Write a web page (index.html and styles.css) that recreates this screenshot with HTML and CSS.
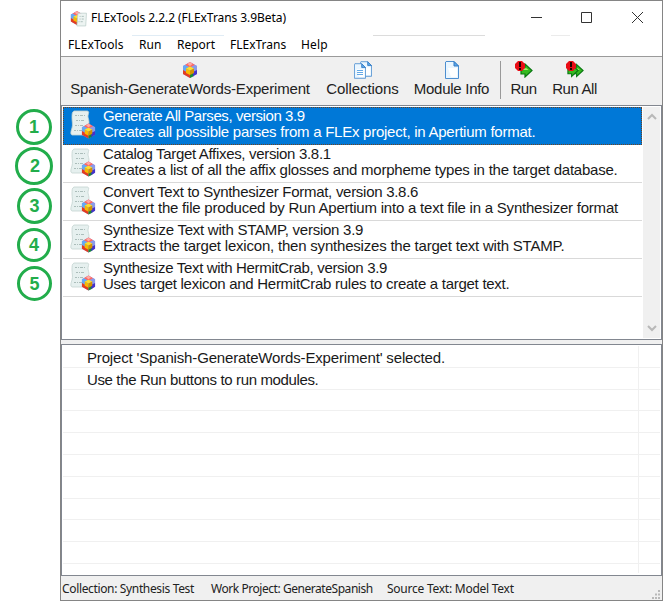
FILE: index.html
```html
<!DOCTYPE html>
<html lang="en">
<head>
<meta charset="utf-8">
<title>FLExTools</title>
<link rel="stylesheet" href="styles.css">
</head>
<body>
<svg class="defs" width="0" height="0">
  <defs>
    <symbol id="cube" viewBox="0 0 16 16">
      <path fill="#9d8fe0" d="M8 0l7 4v8l-7 4-7-4V4z"/>
      <path fill="#ff6a62" d="M8 0l5 3-5 3-5-3z"/>
      <path fill="#ffaaa5" d="M8 0l2.500 2L8 4 5.500 2z"/>
      <path fill="#65a8f5" d="M1 4l2-1 4 2v6l-6-3z"/>
      <path fill="#8a9bea" d="M15 4l-2-1-4 2v6l6-3z"/>
      <path fill="#e23c22" d="M1 8l7 4v4l-7-4z"/>
      <path fill="#168a36" d="M8 11v5l4-2V9z"/>
      <path fill="#4532c9" d="M15 8l-4 2v4.300l4-2.300z"/>
      <path fill="#ffe02a" d="M8 4.500l4 2-4 2-4-2z"/>
      <path fill="#f8ba00" d="M4 6.500l4 2V13l-4-2z"/>
      <path fill="#d59200" d="M12 6.500l-4 2V13l4-2z"/>
    </symbol>
    <symbol id="module" viewBox="0 0 26 29">
      <path fill="#e6f0ef" stroke="#c3d3d1" stroke-width=".8" d="M4 1h13c1.500 0 2 1 1.500 2.500-1.500 4 .5 5 .5 8.500 0 6-2 8-1 13H2c-2-1-1-4 0-7 1-4 0-6 0-10C2 4 2 2 4 1z"/>
      <path stroke="#abbdba" stroke-width="1" stroke-dasharray="2 1 1 1 3 1" d="M5 5.500h10M6 10.500h9M5 15.500h9M4 20.500h8"/>
      <svg x="11" y="13" width="15" height="16"><use href="#cube"/></svg>
    </symbol>
    <symbol id="page" viewBox="0 0 14 18">
      <path fill="#eaf6ff" stroke="#4d8fd0" d="M1 .5h8l4.500 4.500v12.500H.5V1z"/>
      <path fill="#fff" d="M3 7h9v9H6z"/>
      <path fill="#5ba8ea" stroke="#347bc4" d="M9 .5V5h4.500z"/>
    </symbol>
    <symbol id="arrow" viewBox="0 0 13 15">
      <path fill="#36ba20" stroke="#087711" stroke-width="1.200" d="M1 4h4V1l7 6.500L5 14v-3H1z"/>
      <path fill="#a4ef69" d="M2 5.200h4.500l2 1.800H2z"/>
    </symbol>
    <symbol id="alert" viewBox="0 0 10 10">
      <path fill="#e90c15" d="M3 0h4l3 3v4l-3 3H3L0 7V3z"/>
      <path fill="#240000" d="M4 1h2v5H4zM4 7h2v2H4z"/>
    </symbol>
  </defs>
</svg>
<div class="page">
  <ol class="steps">
    <li class="s1">1</li><li class="s2">2</li><li class="s3">3</li><li class="s4">4</li><li class="s5">5</li>
  </ol>
  <main class="window">
    <header class="titlebar">
      <svg class="appicon" viewBox="0 0 16 16"><svg width="13" height="15"><use href="#cube"/></svg><path fill="#edf4f2" stroke="#bdcfcb" stroke-width=".7" d="M7.500 3h8l-.7 12H6.500z"/><path stroke="#9aafab" stroke-width=".7" stroke-dasharray="1 1 2 1" d="M9 6h5M9 8.500h5M8 11h5"/></svg>
      <span class="title">FLExTools 2.2.2 (FLExTrans 3.9Beta)</span>
      <svg class="controls" width="112" height="14" viewBox="0 0 112 14"><path fill="none" stroke="#333" d="M0 6.500h11M50.500 1.500h10v10h-10zM101 1l11 11M112 1l-11 11"/></svg>
    </header>
    <nav class="menu"><span class="m1">FLExTools</span><span class="m2">Run</span><span class="m3">Report</span><span class="m4">FLExTrans</span><span class="m5">Help</span></nav>
    <div class="toolbar">
      <button class="t1"><svg width="16" height="18"><use href="#cube"/></svg><span>Spanish-GenerateWords-Experiment</span></button>
      <button class="t2"><svg width="18" height="18" viewBox="0 0 18 18"><svg x="6" width="12" height="16"><use href="#page"/></svg><svg y="2" width="12" height="16"><use href="#page"/></svg><path stroke="#65a9e6" d="M3 9.500h6M3 11.500h6M3 13.500h6"/></svg><span>Collections</span></button>
      <button class="t3"><svg width="14" height="18"><use href="#page"/></svg><span>Module Info</span></button>
      <i class="separator"></i>
      <button class="t4"><svg width="18" height="18" viewBox="0 0 18 18"><svg x="5" y="2" width="13" height="15"><use href="#arrow"/></svg><svg width="10" height="10"><use href="#alert"/></svg></svg><span>Run</span></button>
      <button class="t5"><svg width="18" height="18" viewBox="0 0 18 18"><svg x="6" y="2" width="12" height="15"><use href="#arrow"/></svg><svg x="1" y="2" width="12" height="15"><use href="#arrow"/></svg><svg width="10" height="10"><use href="#alert"/></svg></svg><span>Run All</span></button>
    </div>
    <section class="modules">
      <div class="list">
        <article class="selected"><svg class="moduleicon"><use href="#module"/></svg><p><span class="a1">Generate All Parses, version 3.9</span><span class="b1">Creates all possible parses from a FLEx project, in Apertium format.</span></p></article>
        <article><svg class="moduleicon"><use href="#module"/></svg><p><span class="a2">Catalog Target Affixes, version 3.8.1</span><span class="b2">Creates a list of all the affix glosses and morpheme types in the target database.</span></p></article>
        <article><svg class="moduleicon"><use href="#module"/></svg><p><span class="a3">Convert Text to Synthesizer Format, version 3.8.6</span><span class="b3">Convert the file produced by Run Apertium into a text file in a Synthesizer format</span></p></article>
        <article><svg class="moduleicon"><use href="#module"/></svg><p><span class="a4">Synthesize Text with STAMP, version 3.9</span><span class="b4">Extracts the target lexicon, then synthesizes the target text with STAMP.</span></p></article>
        <article><svg class="moduleicon"><use href="#module"/></svg><p><span class="a5">Synthesize Text with HermitCrab, version 3.9</span><span class="b5">Uses target lexicon and HermitCrab rules to create a target text.</span></p></article>
      </div>
      <div class="scrollbar"><svg width="10" height="7"><path d="M1 6l4-4 4 4"/></svg><svg width="10" height="7"><path d="M1 1l4 4 4-4"/></svg></div>
    </section>
    <section class="messages">
      <div><span class="c1">Project 'Spanish-GenerateWords-Experiment' selected.</span></div><div><span class="c2">Use the Run buttons to run modules.</span></div><div></div><div></div><div></div><div></div><div></div><div></div><div></div><div></div>
    </section>
    <footer class="status"><span class="f1">Collection: Synthesis Test</span><span class="f2">Work Project: GenerateSpanish</span><span class="f3">Source Text: Model Text</span><svg width="10" height="10"><path fill="#b9b9b9" d="M7 0h2v2H7zM4 3.500h2v2H4zM7 3.500h2v2H7zM1 7h2v2H1zM4 7h2v2H4zM7 7h2v2H7z"/></svg></footer>
  </main>
</div>
</body>
</html>
```
FILE: styles.css
```css
* { box-sizing: border-box; }
body { margin: 0; background: #fff; color: #191919; overflow: hidden; font-family: "Liberation Sans", sans-serif; }
.defs { position: absolute; }
.page { display: flex; width: 663px; height: 602px; }
.steps { list-style: none; margin: 0; padding: 109px 0 0 15px; width: 60px; flex: none; color: #22ad4b; font: bold 18px/30px "Liberation Sans", sans-serif; }
.steps li { width: 36px; height: 36px; border: 3px solid #22ad4b; border-radius: 50%; text-align: center; margin: 0 0 2px 1px; }
.steps .s2 { width: 38px; height: 38px; line-height: 32px; margin: 0 0 3px; padding-left: 2px; }
.steps .s3 { width: 35px; margin-left: 2px; margin-bottom: 4px; }
.steps .s4 { width: 34px; height: 34px; line-height: 28px; margin: 0 0 4px 2px; }
.steps .s5 { width: 35px; height: 35px; margin-left: 2px; }
.window { width: 603px; height: 601px; border: 1px solid #858585; display: flex; flex-direction: column; white-space: nowrap; background: #f0f0f0; }
.titlebar { height: 34px; flex: none; background: #fff; display: flex; align-items: center; padding: 0 19px 0 9px; font: 12px/20px "Noto Sans", sans-serif; color: #000; }
.title { letter-spacing: -.06px; }
.appicon { width: 17px; height: 17px; margin-right: 4px; }
.controls { margin-left: auto; overflow: visible; }
.menu { background: linear-gradient(#dcdcdc, #dcdcdc) 312px 0 / 112px 1px no-repeat, linear-gradient(#ebebeb, #ebebeb) 490px 0 / 19px 1px no-repeat, linear-gradient(#e0ecf5, #e0ecf5) 71px 0 / 92px 1px no-repeat, #fff; height: 21px; flex: none; display: flex; padding-left: 7px; font: 12px/20px "Noto Sans", sans-serif; color: #000; }
.menu .m1 { width: 71px; letter-spacing: .1px; }
.menu .m2 { width: 38px; }
.menu .m3 { width: 53px; }
.menu .m4 { width: 71px; }
.menu .m5 { letter-spacing: .2px; }
.toolbar { height: 49px; flex: none; border-top: 1px solid #9a9a9a; display: flex; padding: 4px 0 0 1px; }
.toolbar button { border: 0; background: none; padding: 0; display: flex; flex-direction: column; align-items: center; font: 15px/18px "Liberation Sans", sans-serif; color: #222; flex: none; height: 40px; gap: 1px; }
.toolbar .t1 { width: 256px; letter-spacing: -.19px; }
.toolbar .t2 { width: 89px; letter-spacing: -.1px; }
.toolbar .t3 { width: 93px; letter-spacing: -.28px; padding-right: 4px; }
.toolbar .t4 { width: 45px; letter-spacing: -.5px; }
.toolbar .t5 { width: 57px; letter-spacing: -.4px; }
.separator { width: 1px; height: 38px; background: #999; }
.modules { height: 235px; flex: none; border: 1px solid #828790; display: flex; background: #fff; padding: 1px; }
.list { width: 579px; }
article { height: 38px; border-bottom: 1px solid #d9d9d9; display: flex; padding-left: 7px; }
article.selected { background: #0078d7 padding-box; color: #fff; height: 38px; border: 1px dotted #b8713a; padding-left: 6px; }
.selected .moduleicon { margin-top: 2px; }
.selected p { margin-top: 0; }
.moduleicon { width: 26px; height: 29px; margin: 3px 7px 0 0; flex: none; }
article p { margin: 1px 0 0; font-size: 15px; line-height: 16px; }
article p span { display: block; width: max-content; }
article.selected { background: #0078d7; border-color: #70421f; }
.a1 { letter-spacing: -.42px; }
.a2 { letter-spacing: -.32px; }
.a3 { letter-spacing: -.285px; }
.a4 { letter-spacing: -.256px; }
.a5 { letter-spacing: -.32px; }
.b1 { letter-spacing: -.25px; }
.b2 { letter-spacing: -.23px; }
.b3 { letter-spacing: -.217px; }
.b4 { letter-spacing: -.205px; }
.b5 { letter-spacing: -.277px; }
.c1 { letter-spacing: -.164px; }
.c2 { letter-spacing: -.37px; }
.scrollbar { background: #f0f0f0; margin-left: 1px; flex: 1; display: flex; flex-direction: column; align-items: center; justify-content: space-between; padding: 6px 0; }
.scrollbar path { fill: none; stroke: #b8b8b8; stroke-width: 2; }
.messages { height: 232px; margin-top: 4px; flex: none; border: 1px solid #828790; background: linear-gradient(#f0f0f0, #f0f0f0) 576px 1px / 1px 227px no-repeat #fff; padding: 1px; font-size: 15px; line-height: 23px; }
.messages div { height: 21.800px; border-bottom: 1px solid #f0f0f0; padding-left: 24px; }
.status { display: flex; height: 24px; font: 12px/25px "Noto Sans", sans-serif; padding-left: 1px; position: relative; color: #222; }
.status .f1 { width: 149px; letter-spacing: -.35px; }
.status .f2 { width: 176px; letter-spacing: -.45px; }
.status .f3 { letter-spacing: -.25px; }
.status svg { position: absolute; right: 1px; bottom: 0; }
```
